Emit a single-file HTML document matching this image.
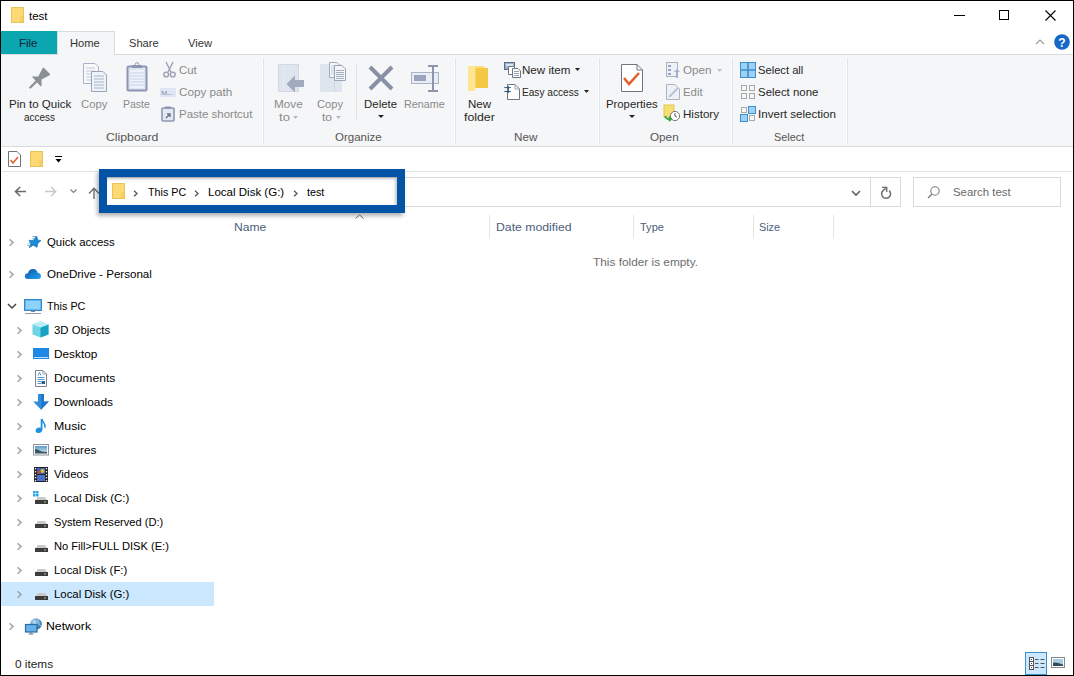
<!DOCTYPE html>
<html><head><meta charset="utf-8"><style>
html,body{margin:0;padding:0;width:1074px;height:676px;overflow:hidden;background:#fff}
.t{position:absolute;white-space:nowrap;font-family:"Liberation Sans",sans-serif;font-size:12px;line-height:15px;transform-origin:0 0}
svg{overflow:visible}
</style></head><body>
<div style="position:absolute;left:0px;top:0px;width:1074px;height:676px;background:#fff"></div>
<div style="position:absolute;left:1px;top:54px;width:1072px;height:93px;background:#f5f6f7;border-top:1px solid #dadbdc;border-bottom:1px solid #dadbdc;box-sizing:border-box"></div>
<div style="position:absolute;left:1px;top:31px;width:56px;height:23px;background:#0ca6b0"></div>
<div style="position:absolute;left:57px;top:31px;width:58px;height:24px;background:#f5f6f7;border:1px solid #dadbdc;border-bottom:none;box-sizing:border-box"></div>
<div style="position:absolute;left:263px;top:58px;width:1px;height:86px;background:#e2e3e4"></div>
<div style="position:absolute;left:262px;top:58px;width:1px;height:86px;background:#fbfcfd"></div>
<div style="position:absolute;left:455px;top:58px;width:1px;height:86px;background:#e2e3e4"></div>
<div style="position:absolute;left:454px;top:58px;width:1px;height:86px;background:#fbfcfd"></div>
<div style="position:absolute;left:599px;top:58px;width:1px;height:86px;background:#e2e3e4"></div>
<div style="position:absolute;left:598px;top:58px;width:1px;height:86px;background:#fbfcfd"></div>
<div style="position:absolute;left:732px;top:58px;width:1px;height:86px;background:#e2e3e4"></div>
<div style="position:absolute;left:731px;top:58px;width:1px;height:86px;background:#fbfcfd"></div>
<div style="position:absolute;left:847px;top:58px;width:1px;height:86px;background:#e2e3e4"></div>
<div style="position:absolute;left:846px;top:58px;width:1px;height:86px;background:#fbfcfd"></div>
<div style="position:absolute;left:356px;top:64px;width:1px;height:56px;background:#e2e3e4"></div>
<div style="position:absolute;left:2px;top:171px;width:1070px;height:1px;background:#e3e3e3"></div>
<svg style="position:absolute;left:11px;top:7px" width="13" height="16" viewBox="0 0 13 16"><rect x="0.5" y="0.5" width="12" height="15" fill="#fcd975" stroke="#e8c35a"/><rect x="9" y="9" width="3" height="6" fill="#f6cf5f"/></svg>
<div class="t" style="left:29.00px;top:9px;font-size:11.5px;color:#000;transform:scaleX(0.9989);">test</div>
<div style="position:absolute;left:954px;top:15px;width:11px;height:1px;background:#000"></div>
<div style="position:absolute;left:999px;top:10px;width:10px;height:10px;border:1px solid #000;box-sizing:border-box"></div>
<svg style="position:absolute;left:1045px;top:10px" width="11" height="11" viewBox="0 0 11 11"><path d="M0.5 0.5L10.5 10.5M10.5 0.5L0.5 10.5" stroke="#000" stroke-width="1.1"/></svg>
<div class="t" style="left:19.30px;top:36px;font-size:11.5px;color:#10203a;transform:scaleX(0.9937);">File</div>
<div class="t" style="left:70.34px;top:36px;font-size:11.5px;color:#333;transform:scaleX(0.9729);">Home</div>
<div class="t" style="left:129.08px;top:36px;font-size:11.5px;color:#333;transform:scaleX(0.9645);">Share</div>
<div class="t" style="left:188.26px;top:36px;font-size:11.5px;color:#333;transform:scaleX(0.9704);">View</div>
<svg style="position:absolute;left:1035px;top:39px" width="10" height="6" viewBox="0 0 10 6"><path d="M1 5L5 1L9 5" stroke="#9a9a9a" stroke-width="1.2" fill="none"/></svg>
<svg style="position:absolute;left:1054px;top:34px" width="16" height="16" viewBox="0 0 16 16"><circle cx="8" cy="8" r="7.8" fill="#1767c6"/><text x="8" y="12.6" font-family="Liberation Sans" font-weight="bold" font-size="12" fill="#fff" text-anchor="middle">?</text></svg>
<svg style="position:absolute;left:26px;top:64px" width="28" height="28" viewBox="0 0 28 28"><path d="M5.8 12.6L12.3 12.4L16.6 4.2L17.6 3.6L24.2 10.2L23.6 11.2L15.5 15.6L15.6 22L14.8 22.6Z" fill="#8a9196"/><path d="M4.3 23.5L11.2 16.6" stroke="#8a9196" stroke-width="2.2" stroke-linecap="round"/></svg>
<div class="t" style="left:8.56px;top:97px;font-size:11.5px;color:#262626;transform:scaleX(1.0054);">Pin to Quick</div>
<div class="t" style="left:24.26px;top:110px;font-size:11.5px;color:#262626;transform:scaleX(0.8678);">access</div>
<svg style="position:absolute;left:83px;top:63px" width="25" height="29" viewBox="0 0 25 29"><path d="M0.5 0.5H12L15.5 4V20.5H0.5Z" fill="#f7f9fc" stroke="#a8b2c2"/><g stroke="#c3cad6"><path d="M3 5H12M3 8H12M3 11H12M3 14H12M3 17H12"/></g><path d="M8.5 8.5H20L23.5 12V28.5H8.5Z" fill="#eef3fa" stroke="#98a4b8"/><g stroke="#a9b4c6"><path d="M11 13H21M11 16H21M11 19H21M11 22H21M11 25H21"/></g></svg>
<div class="t" style="left:80.58px;top:97px;font-size:11.5px;color:#8a8a8a;transform:scaleX(0.9785);">Copy</div>
<svg style="position:absolute;left:126px;top:62px" width="22" height="30" viewBox="0 0 22 30"><rect x="1.5" y="4.5" width="19" height="24" rx="1" fill="#dde5f4" stroke="#8d96b0" stroke-width="2"/><rect x="4" y="8" width="14" height="18" fill="#eef2fb"/><g stroke="#c7d0e4"><path d="M4 11H18M4 14H18M4 17H18M4 20H18M4 23H18"/></g><rect x="6" y="3" width="10" height="3" fill="#8d96b0"/><circle cx="11" cy="2.5" r="1.8" fill="none" stroke="#8d96b0"/></svg>
<div class="t" style="left:123.06px;top:97px;font-size:11.5px;color:#8a8a8a;transform:scaleX(0.9127);">Paste</div>
<svg style="position:absolute;left:163px;top:62px" width="13" height="16" viewBox="0 0 13 16"><path d="M3 0L8 10M10 0L5 10" stroke="#9aa0b4" stroke-width="1.4"/><circle cx="3.2" cy="12.5" r="2.4" fill="none" stroke="#9aa0b4" stroke-width="1.4"/><circle cx="9.8" cy="12.5" r="2.4" fill="none" stroke="#9aa0b4" stroke-width="1.4"/></svg>
<div class="t" style="left:179.34px;top:63px;font-size:11.5px;color:#8a8a8a;transform:scaleX(0.9926);">Cut</div>
<svg style="position:absolute;left:160px;top:88px" width="16" height="9" viewBox="0 0 16 9"><rect x="0" y="0" width="16" height="9" fill="#dfe6f3"/><text x="1" y="7" font-family="Liberation Serif" font-size="7" fill="#7d879e">M...</text></svg>
<div class="t" style="left:179.34px;top:85px;font-size:11.5px;color:#8a8a8a;transform:scaleX(1.0177);">Copy path</div>
<svg style="position:absolute;left:161px;top:106px" width="14" height="16" viewBox="0 0 14 16"><rect x="1" y="2" width="12" height="13" rx="1" fill="#e3e8f2" stroke="#8d96b0" stroke-width="1.6"/><rect x="4" y="0.5" width="6" height="2.5" fill="#8d96b0"/><path d="M5 12L9 8M6 8H9V11" stroke="#6d7894" stroke-width="1.5" fill="none"/></svg>
<div class="t" style="left:179.34px;top:107px;font-size:11.5px;color:#8a8a8a;transform:scaleX(0.9984);">Paste shortcut</div>
<div class="t" style="left:105.54px;top:130px;font-size:11.5px;color:#555;transform:scaleX(1.0649);">Clipboard</div>
<svg style="position:absolute;left:278px;top:64px" width="27" height="29" viewBox="0 0 27 29"><rect x="0" y="0" width="21" height="28" fill="#dfe5ee"/><rect x="0.5" y="0.5" width="20" height="27" fill="none" stroke="#d2d9e4"/><path d="M5.5 3V27" stroke="#e6ebf2"/><path d="M8.5 20L17 11.5V16H26V23H17V28.5Z" fill="#a1abbe"/></svg>
<div class="t" style="left:273.56px;top:97px;font-size:11.5px;color:#8a8a8a;transform:scaleX(1.0200);">Move</div>
<div class="t" style="left:279.26px;top:110px;font-size:11.5px;color:#8a8a8a;transform:scaleX(1.1400);">to</div>
<svg style="position:absolute;left:293px;top:116px" width="5" height="3" viewBox="0 0 5 3"><path d="M0 0H5L2.5 3Z" fill="#b8b8b8"/></svg>
<svg style="position:absolute;left:320px;top:62px" width="27" height="30" viewBox="0 0 27 30"><rect x="0" y="2" width="22" height="28" fill="#dfe5ee"/><path d="M14.5 2V30" stroke="#cfd6e2"/><path d="M9.5 0.5H17L19.5 3V15.5H9.5Z" fill="#f4f6fa" stroke="#a0abbd"/><g stroke="#c0c8d6" stroke-width="0.8"><path d="M11 4H17M11 6H17M11 8H17M11 10H17M11 12H17"/></g><path d="M14.5 3.5H22L25.5 7V18.5H14.5Z" fill="#f4f6fa" stroke="#98a4b8"/><g stroke="#9aa6ba" stroke-width="0.9"><path d="M16 8.5H24M16 10.5H24M16 12.5H24M16 14.5H24M16 16.5H24"/></g></svg>
<div class="t" style="left:316.82px;top:97px;font-size:11.5px;color:#8a8a8a;transform:scaleX(0.9689);">Copy</div>
<div class="t" style="left:321.98px;top:110px;font-size:11.5px;color:#8a8a8a;transform:scaleX(1.0420);">to</div>
<svg style="position:absolute;left:336px;top:116px" width="5" height="3" viewBox="0 0 5 3"><path d="M0 0H5L2.5 3Z" fill="#b8b8b8"/></svg>
<svg style="position:absolute;left:368px;top:65px" width="26" height="26" viewBox="0 0 26 26"><path d="M2 2L24 24M24 2L2 24" stroke="#8790a6" stroke-width="4"/></svg>
<div class="t" style="left:363.56px;top:97px;font-size:11.5px;color:#262626;transform:scaleX(0.9965);">Delete</div>
<svg style="position:absolute;left:378px;top:115px" width="6" height="3" viewBox="0 0 6 3"><path d="M0 0H6L3 3Z" fill="#222"/></svg>
<svg style="position:absolute;left:411px;top:65px" width="28" height="27" viewBox="0 0 28 27"><rect x="0.5" y="7.5" width="27" height="11" fill="#e9edf4" stroke="#aab3c6"/><rect x="3" y="10" width="12" height="6" fill="#9aa3bf"/><path d="M17 1H27M22 1V26M17 26H27" stroke="#8c95ab" stroke-width="2" fill="none"/></svg>
<div class="t" style="left:404.30px;top:97px;font-size:11.5px;color:#8a8a8a;transform:scaleX(0.9400);">Rename</div>
<div class="t" style="left:334.74px;top:130px;font-size:11.5px;color:#555;transform:scaleX(0.9987);">Organize</div>
<svg style="position:absolute;left:468px;top:65px" width="20" height="26" viewBox="0 0 20 26"><path d="M0 1H15L17 3H20V23H7L0 26Z" fill="#fbe07a"/><path d="M7 3H20V23H7Z" fill="#f5c843"/><path d="M0 1H7V26H0Z" fill="#fde68f"/><path d="M7 3V23" stroke="#f7e6a8" stroke-width="0.8"/></svg>
<div class="t" style="left:468.06px;top:97px;font-size:11.5px;color:#262626;transform:scaleX(1.0050);">New</div>
<div class="t" style="left:464.00px;top:110px;font-size:11.5px;color:#262626;transform:scaleX(1.0683);">folder</div>
<svg style="position:absolute;left:504px;top:62px" width="17" height="16" viewBox="0 0 17 16"><rect x="0.5" y="0.5" width="10" height="7" fill="#9fb3c8" stroke="#5c6e80"/><rect x="2" y="2" width="7" height="2" fill="#d8e4ef"/><path d="M4.5 4.5H9.5L11.5 6.5V12.5H4.5Z" fill="#fff" stroke="#6b7684"/><path d="M8.5 6.5H14L16.5 9V15.5H8.5Z" fill="#fff" stroke="#6b7684"/><path d="M10 9.5H15M10 11.5H15M10 13.5H15" stroke="#98a2ae"/></svg>
<div class="t" style="left:522.32px;top:63px;font-size:11.5px;color:#262626;transform:scaleX(1.0079);">New item</div>
<svg style="position:absolute;left:575px;top:68px" width="5" height="3" viewBox="0 0 5 3"><path d="M0 0H5L2.5 3Z" fill="#222"/></svg>
<svg style="position:absolute;left:504px;top:83px" width="16" height="17" viewBox="0 0 16 17"><path d="M3.5 1.5H11L15.5 6V16.5H3.5Z" fill="#fff" stroke="#6b7684"/><path d="M11 1.5V6H15.5" fill="none" stroke="#a0a8b2"/><path d="M0.3 4.6H6.8M0.3 8.5H6.8M4.4 3V10" stroke="#2d5b7c" stroke-width="1"/></svg>
<div class="t" style="left:522.32px;top:85px;font-size:11.5px;color:#262626;transform:scaleX(0.8794);">Easy access</div>
<svg style="position:absolute;left:584px;top:90px" width="5" height="3" viewBox="0 0 5 3"><path d="M0 0H5L2.5 3Z" fill="#222"/></svg>
<div class="t" style="left:514.06px;top:130px;font-size:11.5px;color:#555;transform:scaleX(1.0150);">New</div>
<svg style="position:absolute;left:621px;top:64px" width="22" height="28" viewBox="0 0 22 28"><path d="M0.5 0.5H16L21.5 6V27.5H0.5Z" fill="#fff" stroke="#6e747c"/><path d="M16 0.5V6H21.5" fill="none" stroke="#6e747c"/><path d="M3 14L8 20L18 9" stroke="#e2622a" stroke-width="2.6" fill="none"/></svg>
<div class="t" style="left:605.58px;top:97px;font-size:11.5px;color:#262626;transform:scaleX(0.9842);">Properties</div>
<svg style="position:absolute;left:629px;top:115px" width="6" height="3" viewBox="0 0 6 3"><path d="M0 0H6L3 3Z" fill="#222"/></svg>
<svg style="position:absolute;left:666px;top:62px" width="14" height="16" viewBox="0 0 14 16"><rect x="0.5" y="0.5" width="11" height="14" fill="#eef1f6" stroke="#aab3c6"/><rect x="2" y="3" width="3" height="2" fill="#9aa3bf"/><rect x="2" y="7" width="3" height="2" fill="#9aa3bf"/><rect x="2" y="11" width="3" height="2" fill="#9aa3bf"/><path d="M8 10L11 7L14 10L12 10L12 16H10V10Z" fill="#a7aed0"/></svg>
<div class="t" style="left:682.58px;top:63px;font-size:11.5px;color:#8a8a8a;transform:scaleX(1.0150);">Open</div>
<svg style="position:absolute;left:717px;top:69px" width="5" height="3" viewBox="0 0 5 3"><path d="M0 0H5L2.5 3Z" fill="#c0c0c0"/></svg>
<svg style="position:absolute;left:666px;top:84px" width="14" height="16" viewBox="0 0 14 16"><path d="M0.5 0.5H9L13.5 5V15.5H0.5Z" fill="#eef1f6" stroke="#aab3c6"/><path d="M3 13L12 4" stroke="#b9c1d6" stroke-width="2"/></svg>
<div class="t" style="left:682.58px;top:85px;font-size:11.5px;color:#8a8a8a;transform:scaleX(0.9933);">Edit</div>
<svg style="position:absolute;left:664px;top:105px" width="16" height="16" viewBox="0 0 16 16"><rect x="0" y="0" width="10" height="12" fill="#f5df74" stroke="#e3c34c"/><circle cx="11" cy="11" r="4.6" fill="#fff" stroke="#777"/><path d="M11 8V11L13 12" stroke="#555" fill="none"/><path d="M1 11C2 14 5 15 7 14M5 12L7 14L5 16" stroke="#2ea43a" stroke-width="1.8" fill="none"/></svg>
<div class="t" style="left:682.58px;top:107px;font-size:11.5px;color:#262626;transform:scaleX(1.0050);">History</div>
<div class="t" style="left:650.26px;top:130px;font-size:11.5px;color:#555;transform:scaleX(1.0179);">Open</div>
<svg style="position:absolute;left:740px;top:62px" width="16" height="16" viewBox="0 0 16 16"><rect x="0.5" y="0.5" width="15" height="15" fill="#9fd0f2" stroke="#3a8fd0"/><path d="M8 0V16M0 8H16" stroke="#3a8fd0" stroke-width="1.6"/></svg>
<div class="t" style="left:758.34px;top:63px;font-size:11.5px;color:#262626;transform:scaleX(0.9715);">Select all</div>
<svg style="position:absolute;left:740px;top:85px" width="16" height="14" viewBox="0 0 16 14"><g fill="none" stroke="#a8a8a8"><rect x="1.5" y="0.5" width="5" height="5"/><rect x="9.5" y="0.5" width="5" height="5"/><rect x="1.5" y="8.5" width="5" height="5"/><rect x="9.5" y="8.5" width="5" height="5"/></g></svg>
<div class="t" style="left:758.34px;top:85px;font-size:11.5px;color:#262626;transform:scaleX(0.9941);">Select none</div>
<svg style="position:absolute;left:740px;top:106px" width="16" height="16" viewBox="0 0 16 16"><g fill="none" stroke="#a8a8a8"><rect x="1.5" y="1.5" width="5" height="5"/><rect x="9.5" y="9.5" width="5" height="5"/></g><rect x="8.5" y="0.5" width="7" height="7" fill="#9fd0f2" stroke="#3a8fd0"/><rect x="0.5" y="8.5" width="7" height="7" fill="#9fd0f2" stroke="#3a8fd0"/></svg>
<div class="t" style="left:758.34px;top:107px;font-size:11.5px;color:#262626;transform:scaleX(1.0088);">Invert selection</div>
<div class="t" style="left:773.56px;top:130px;font-size:11.5px;color:#555;transform:scaleX(0.9436);">Select</div>
<svg style="position:absolute;left:8px;top:151px" width="13" height="16" viewBox="0 0 13 16"><path d="M0.5 0.5H9L12.5 4V15.5H0.5Z" fill="#fff" stroke="#6e747c"/><path d="M2.5 9L5 12L10 6" stroke="#e2622a" stroke-width="1.5" fill="none"/></svg>
<svg style="position:absolute;left:30px;top:151px" width="13" height="16" viewBox="0 0 13 16"><rect x="0.5" y="0.5" width="12" height="15" fill="#fcd975" stroke="#e8c35a"/><rect x="9" y="9" width="3" height="6" fill="#f6cf5f"/></svg>
<svg style="position:absolute;left:55px;top:156px" width="8" height="8" viewBox="0 0 8 8"><path d="M0 0.5H7" stroke="#000"/><path d="M0.5 3H6.5L3.5 6.5Z" fill="#000"/></svg>
<svg style="position:absolute;left:14px;top:186px" width="13" height="11" viewBox="0 0 13 11"><path d="M12 5.5H1.8M6.2 1L1.5 5.5L6.2 10" stroke="#6a6a6a" stroke-width="1.6" fill="none"/></svg>
<svg style="position:absolute;left:44px;top:186px" width="13" height="11" viewBox="0 0 13 11"><path d="M1 5.5H11.5M7 1L11.7 5.5L7 10" stroke="#c8c8c8" stroke-width="1.4" fill="none"/></svg>
<svg style="position:absolute;left:70px;top:189px" width="7" height="5" viewBox="0 0 7 5"><path d="M0.5 0.5L3.5 3.5L6.5 0.5" stroke="#808080" stroke-width="1.2" fill="none"/></svg>
<svg style="position:absolute;left:88px;top:187px" width="12" height="12" viewBox="0 0 12 12"><path d="M6 12V1.5M1 6.5L6 1.3L11 6.5" stroke="#707070" stroke-width="1.4" fill="none"/></svg>
<div style="position:absolute;left:105px;top:177px;width:796px;height:30px;border:1px solid #d9d9d9;box-sizing:border-box;background:#fff"></div>
<div style="position:absolute;left:870px;top:177px;width:1px;height:30px;background:#d9d9d9"></div>
<svg style="position:absolute;left:851px;top:190px" width="10" height="6" viewBox="0 0 10 6"><path d="M1 1L5 5L9 1" stroke="#606060" stroke-width="1.6" fill="none"/></svg>
<svg style="position:absolute;left:876px;top:182px" width="20" height="20" viewBox="0 0 20 20"><path d="M13.2 8.6A4.5 4.5 0 1 1 7.3 8.3L9.8 6.2" stroke="#707070" stroke-width="1.5" fill="none"/><path d="M6 5.4H10.7V10" stroke="#707070" stroke-width="1.4" fill="none"/></svg>
<div style="position:absolute;left:913px;top:177px;width:148px;height:30px;border:1px solid #d9d9d9;box-sizing:border-box;background:#fff"></div>
<svg style="position:absolute;left:927px;top:186px" width="13" height="13" viewBox="0 0 13 13"><circle cx="8" cy="5" r="4.2" stroke="#7a7a7a" stroke-width="1.1" fill="none"/><path d="M5 8L1 12" stroke="#7a7a7a" stroke-width="1.2"/></svg>
<div class="t" style="left:953.32px;top:185px;font-size:11.5px;color:#6a6a6a;transform:scaleX(0.9895);">Search test</div>
<div style="position:absolute;left:99px;top:169px;width:306px;height:44px;border:8px solid #0353a6;box-sizing:border-box;box-shadow:-2px 3px 4px rgba(0,0,0,0.3), inset -2px 2px 3px rgba(0,0,0,0.22)"></div>
<svg style="position:absolute;left:112px;top:183px" width="13" height="16" viewBox="0 0 13 16"><rect x="0.5" y="0.5" width="12" height="15" fill="#fcd975" stroke="#e8c35a"/><rect x="9" y="9" width="3" height="6" fill="#f6cf5f"/></svg>
<svg style="position:absolute;left:133px;top:190px" width="5" height="7" viewBox="0 0 5 7"><path d="M1 0.8L4 3.5L1 6.2" stroke="#555" stroke-width="1.3" fill="none"/></svg>
<svg style="position:absolute;left:194px;top:190px" width="5" height="7" viewBox="0 0 5 7"><path d="M1 0.8L4 3.5L1 6.2" stroke="#555" stroke-width="1.3" fill="none"/></svg>
<svg style="position:absolute;left:293px;top:190px" width="5" height="7" viewBox="0 0 5 7"><path d="M1 0.8L4 3.5L1 6.2" stroke="#555" stroke-width="1.3" fill="none"/></svg>
<div class="t" style="left:147.76px;top:185px;font-size:11.5px;color:#000;transform:scaleX(0.9324);">This PC</div>
<div class="t" style="left:208.30px;top:185px;font-size:11.5px;color:#000;transform:scaleX(1.0021);">Local Disk (G:)</div>
<div class="t" style="left:307.26px;top:185px;font-size:11.5px;color:#000;transform:scaleX(0.9347);">test</div>
<svg style="position:absolute;left:355px;top:214px" width="9" height="5" viewBox="0 0 9 5"><path d="M0.5 4.5L4.5 0.8L8.5 4.5" stroke="#666" stroke-width="1" fill="none"/></svg>
<div class="t" style="left:234.34px;top:220px;font-size:11.5px;color:#4c607a;transform:scaleX(1.0535);">Name</div>
<div style="position:absolute;left:489px;top:215px;width:1px;height:24px;background:#e5e5e5"></div>
<div style="position:absolute;left:633px;top:215px;width:1px;height:24px;background:#e5e5e5"></div>
<div style="position:absolute;left:753px;top:215px;width:1px;height:24px;background:#e5e5e5"></div>
<div style="position:absolute;left:833px;top:215px;width:1px;height:24px;background:#e5e5e5"></div>
<div class="t" style="left:495.82px;top:220px;font-size:11.5px;color:#4c607a;transform:scaleX(1.0651);">Date modified</div>
<div class="t" style="left:640.26px;top:220px;font-size:11.5px;color:#4c607a;transform:scaleX(0.9577);">Type</div>
<div class="t" style="left:759.08px;top:220px;font-size:11.5px;color:#4c607a;transform:scaleX(0.9409);">Size</div>
<div class="t" style="left:593.02px;top:255px;font-size:11.5px;color:#6d6d6d;transform:scaleX(1.0288);">This folder is empty.</div>
<div style="position:absolute;left:1px;top:582px;width:213px;height:24px;background:#cce8ff"></div>
<svg style="position:absolute;left:8px;top:238px" width="6" height="9" viewBox="0 0 6 9"><path d="M1.6 1.2L5 4.5L1.6 7.8" stroke="#a2a2a2" stroke-width="1.6" fill="none"/></svg>
<svg style="position:absolute;left:8px;top:270px" width="6" height="9" viewBox="0 0 6 9"><path d="M1.6 1.2L5 4.5L1.6 7.8" stroke="#a2a2a2" stroke-width="1.6" fill="none"/></svg>
<svg style="position:absolute;left:8px;top:622px" width="6" height="9" viewBox="0 0 6 9"><path d="M1.6 1.2L5 4.5L1.6 7.8" stroke="#a2a2a2" stroke-width="1.6" fill="none"/></svg>
<svg style="position:absolute;left:7px;top:303px" width="10" height="6" viewBox="0 0 10 6"><path d="M1 1L5 5L9 1" stroke="#444" stroke-width="1.5" fill="none"/></svg>
<svg style="position:absolute;left:22px;top:232px" width="22" height="18" viewBox="0 0 22 18"><path d="M14.5 4L16 8.2L19 8.5L15.8 11.5L15 15.3L11.2 13.2L7.2 15.7L8.8 11.5L6.9 8.5L11.5 8.2Z" fill="#1a8ad6" stroke="#1766a8" stroke-width="0.6" stroke-linejoin="round"/><path d="M10.5 4.5H14M10.5 6.3H13M5 13.3H7.5M6.5 11.2H8" stroke="#5aa6de" stroke-width="0.9"/></svg>
<div class="t" style="left:46.74px;top:235px;font-size:11.5px;color:#000;transform:scaleX(0.9881);">Quick access</div>
<svg style="position:absolute;left:24px;top:268px" width="18" height="12" viewBox="0 0 18 12"><defs><linearGradient id="cg" x1="0" y1="0" x2="1" y2="1"><stop offset="0" stop-color="#0b4f9e"/><stop offset="0.6" stop-color="#1a86d8"/><stop offset="1" stop-color="#22a3ee"/></linearGradient></defs><path d="M3.6 11C1.6 11 0.8 9.6 0.9 8C1 6.4 2.3 5.3 3.9 5.3C4.6 2.5 6.6 1 9.1 1C11.6 1 13.4 2.8 13.9 5C16.1 5 17.1 6.6 17 8.3C16.9 9.9 15.9 11 14.4 11Z" fill="url(#cg)"/></svg>
<div class="t" style="left:46.74px;top:267px;font-size:11.5px;color:#000;transform:scaleX(1.0067);">OneDrive - Personal</div>
<svg style="position:absolute;left:24px;top:299px" width="18" height="15" viewBox="0 0 18 15"><rect x="0.5" y="0.5" width="17" height="11" fill="#5eb8f2" stroke="#3a86c6"/><rect x="2" y="2" width="14" height="8" fill="#8fd2fb"/><path d="M1 14.5H17" stroke="#8a9aa8"/><path d="M7 12.5H11" stroke="#6f8aa0"/></svg>
<div class="t" style="left:46.74px;top:299px;font-size:11.5px;color:#000;transform:scaleX(0.9381);">This PC</div>
<svg style="position:absolute;left:16px;top:326px" width="6" height="9" viewBox="0 0 6 9"><path d="M1.6 1.2L5 4.5L1.6 7.8" stroke="#a2a2a2" stroke-width="1.6" fill="none"/></svg>
<svg style="position:absolute;left:32px;top:321.2px" width="17" height="17" viewBox="0 0 17 17"><path d="M8.5 0.5L16.5 3.5V13.5L8.5 16.5L0.5 13.5V3.5Z" fill="#6fd5e6"/><path d="M8.5 6.5L16.5 3.5V13.5L8.5 16.5Z" fill="#17a2c4"/><path d="M0.5 3.5L8.5 0.5L16.5 3.5L8.5 6.5Z" fill="#b8eef5"/></svg>
<div class="t" style="left:54.26px;top:323px;font-size:11.5px;color:#000;transform:scaleX(0.9867);">3D Objects</div>
<svg style="position:absolute;left:16px;top:350px" width="6" height="9" viewBox="0 0 6 9"><path d="M1.6 1.2L5 4.5L1.6 7.8" stroke="#a2a2a2" stroke-width="1.6" fill="none"/></svg>
<svg style="position:absolute;left:33px;top:348.2px" width="16" height="11" viewBox="0 0 16 11"><rect x="0" y="0" width="16" height="11" fill="#1e88e5"/><rect x="1" y="9" width="14" height="1" fill="#bfe3ff"/></svg>
<div class="t" style="left:53.56px;top:347px;font-size:11.5px;color:#000;transform:scaleX(1.0260);">Desktop</div>
<svg style="position:absolute;left:16px;top:374px" width="6" height="9" viewBox="0 0 6 9"><path d="M1.6 1.2L5 4.5L1.6 7.8" stroke="#a2a2a2" stroke-width="1.6" fill="none"/></svg>
<svg style="position:absolute;left:35px;top:369.7px" width="12" height="17" viewBox="0 0 12 17"><path d="M0.5 0.5H8L11.5 4V16.5H0.5Z" fill="#fbfcfd" stroke="#7d8690"/><path d="M8 0.5V4H11.5" fill="none" stroke="#9aa2aa"/><path d="M3 5.5L4.5 2.5L6 5.5M2.5 7.5H9.5M2.5 9.5H9.5M2.5 11.5H6M2.5 13.5H6" stroke="#4a86c0" stroke-width="0.9" fill="none"/><rect x="6.5" y="11" width="3.5" height="3" fill="#2c5f8e"/></svg>
<div class="t" style="left:53.56px;top:371px;font-size:11.5px;color:#000;transform:scaleX(1.0548);">Documents</div>
<svg style="position:absolute;left:16px;top:398px" width="6" height="9" viewBox="0 0 6 9"><path d="M1.6 1.2L5 4.5L1.6 7.8" stroke="#a2a2a2" stroke-width="1.6" fill="none"/></svg>
<svg style="position:absolute;left:33px;top:393.7px" width="16" height="17" viewBox="0 0 16 17"><path d="M5 0H11V7.5H15.8L8 15.8L0.2 7.5H5Z" fill="#2f8ee2"/><path d="M8 0H11V7.5H15.8L8 15.8Z" fill="#2378c8"/></svg>
<div class="t" style="left:53.56px;top:395px;font-size:11.5px;color:#000;transform:scaleX(1.0382);">Downloads</div>
<svg style="position:absolute;left:16px;top:422px" width="6" height="9" viewBox="0 0 6 9"><path d="M1.6 1.2L5 4.5L1.6 7.8" stroke="#a2a2a2" stroke-width="1.6" fill="none"/></svg>
<svg style="position:absolute;left:35px;top:417.7px" width="12" height="16" viewBox="0 0 12 16"><path d="M6.6 1V11.8" stroke="#1e90e0" stroke-width="1.8"/><ellipse cx="3.9" cy="12.3" rx="3.3" ry="2.6" transform="rotate(-20 3.9 12.3)" fill="#1e90e0"/><path d="M6.6 1C7.4 4 10.6 5.2 10 9.6" stroke="#1e90e0" stroke-width="1.6" fill="none"/></svg>
<div class="t" style="left:53.56px;top:419px;font-size:11.5px;color:#000;transform:scaleX(1.0720);">Music</div>
<svg style="position:absolute;left:16px;top:446px" width="6" height="9" viewBox="0 0 6 9"><path d="M1.6 1.2L5 4.5L1.6 7.8" stroke="#a2a2a2" stroke-width="1.6" fill="none"/></svg>
<svg style="position:absolute;left:33px;top:444.2px" width="16" height="12" viewBox="0 0 16 12"><defs><linearGradient id="sky" x1="0" y1="0" x2="0" y2="1"><stop offset="0" stop-color="#5d9bc8"/><stop offset="1" stop-color="#d9e9f3"/></linearGradient></defs><rect x="0.5" y="0.5" width="15" height="10.5" fill="#fff" stroke="#8e9399"/><rect x="2" y="2" width="12" height="7.5" fill="url(#sky)"/><path d="M2 5C4 4.5 6 6.5 9 7.5C11 8 13 7.8 14 8V9.5H2Z" fill="#3b5561"/></svg>
<div class="t" style="left:53.56px;top:443px;font-size:11.5px;color:#000;transform:scaleX(1.0210);">Pictures</div>
<svg style="position:absolute;left:16px;top:470px" width="6" height="9" viewBox="0 0 6 9"><path d="M1.6 1.2L5 4.5L1.6 7.8" stroke="#a2a2a2" stroke-width="1.6" fill="none"/></svg>
<svg style="position:absolute;left:34px;top:467.2px" width="14" height="15" viewBox="0 0 14 15"><rect x="0" y="0" width="14" height="15" fill="#222"/><rect x="3" y="1" width="8" height="6" fill="#3f62b8"/><circle cx="8.5" cy="4" r="2" fill="#e0c23a"/><rect x="3.5" y="4" width="3" height="2.5" fill="#c8453a"/><rect x="3" y="8" width="8" height="6" fill="#4a72c8"/><g fill="#e6e6e6"><rect x="0.8" y="1" width="1.4" height="1.4"/><rect x="0.8" y="4" width="1.4" height="1.4"/><rect x="0.8" y="7" width="1.4" height="1.4"/><rect x="0.8" y="10" width="1.4" height="1.4"/><rect x="0.8" y="13" width="1.4" height="1.4"/><rect x="11.8" y="1" width="1.4" height="1.4"/><rect x="11.8" y="4" width="1.4" height="1.4"/><rect x="11.8" y="7" width="1.4" height="1.4"/><rect x="11.8" y="10" width="1.4" height="1.4"/><rect x="11.8" y="13" width="1.4" height="1.4"/></g></svg>
<div class="t" style="left:54.26px;top:467px;font-size:11.5px;color:#000;transform:scaleX(0.9857);">Videos</div>
<svg style="position:absolute;left:16px;top:494px" width="6" height="9" viewBox="0 0 6 9"><path d="M1.6 1.2L5 4.5L1.6 7.8" stroke="#a2a2a2" stroke-width="1.6" fill="none"/></svg>
<svg style="position:absolute;left:33px;top:491.2px" width="16" height="14" viewBox="0 0 16 14"><g fill="#2ea3e6"><rect x="0" y="0" width="2.5" height="2.5"/><rect x="3" y="0" width="2.5" height="2.5"/><rect x="0" y="3" width="2.5" height="2.5"/><rect x="3" y="3" width="2.5" height="2.5"/></g><path d="M3 9L4.5 6H12L14 9Z" fill="#c9c9c9"/><rect x="2" y="9" width="13" height="4" fill="#3c3c3c"/><rect x="11" y="10.5" width="2" height="1" fill="#7bd17b"/></svg>
<div class="t" style="left:53.56px;top:491px;font-size:11.5px;color:#000;transform:scaleX(0.9984);">Local Disk (C:)</div>
<svg style="position:absolute;left:16px;top:518px" width="6" height="9" viewBox="0 0 6 9"><path d="M1.6 1.2L5 4.5L1.6 7.8" stroke="#a2a2a2" stroke-width="1.6" fill="none"/></svg>
<svg style="position:absolute;left:33px;top:515.2px" width="16" height="14" viewBox="0 0 16 14"><path d="M3 9L4.5 6H12L14 9Z" fill="#c9c9c9"/><rect x="2" y="9" width="13" height="4" fill="#3c3c3c"/><rect x="11" y="10.5" width="2" height="1" fill="#7bd17b"/></svg>
<div class="t" style="left:54.26px;top:515px;font-size:11.5px;color:#000;transform:scaleX(0.9665);">System Reserved (D:)</div>
<svg style="position:absolute;left:16px;top:542px" width="6" height="9" viewBox="0 0 6 9"><path d="M1.6 1.2L5 4.5L1.6 7.8" stroke="#a2a2a2" stroke-width="1.6" fill="none"/></svg>
<svg style="position:absolute;left:33px;top:539.2px" width="16" height="14" viewBox="0 0 16 14"><path d="M3 9L4.5 6H12L14 9Z" fill="#c9c9c9"/><rect x="2" y="9" width="13" height="4" fill="#3c3c3c"/><rect x="11" y="10.5" width="2" height="1" fill="#7bd17b"/></svg>
<div class="t" style="left:53.56px;top:539px;font-size:11.5px;color:#000;transform:scaleX(0.9677);">No Fill&gt;FULL DISK (E:)</div>
<svg style="position:absolute;left:16px;top:566px" width="6" height="9" viewBox="0 0 6 9"><path d="M1.6 1.2L5 4.5L1.6 7.8" stroke="#a2a2a2" stroke-width="1.6" fill="none"/></svg>
<svg style="position:absolute;left:33px;top:563.2px" width="16" height="14" viewBox="0 0 16 14"><path d="M3 9L4.5 6H12L14 9Z" fill="#c9c9c9"/><rect x="2" y="9" width="13" height="4" fill="#3c3c3c"/><rect x="11" y="10.5" width="2" height="1" fill="#7bd17b"/></svg>
<div class="t" style="left:53.56px;top:563px;font-size:11.5px;color:#000;transform:scaleX(0.9889);">Local Disk (F:)</div>
<svg style="position:absolute;left:16px;top:590px" width="6" height="9" viewBox="0 0 6 9"><path d="M1.6 1.2L5 4.5L1.6 7.8" stroke="#a2a2a2" stroke-width="1.6" fill="none"/></svg>
<svg style="position:absolute;left:33px;top:587.2px" width="16" height="14" viewBox="0 0 16 14"><path d="M3 9L4.5 6H12L14 9Z" fill="#c9c9c9"/><rect x="2" y="9" width="13" height="4" fill="#3c3c3c"/><rect x="11" y="10.5" width="2" height="1" fill="#7bd17b"/></svg>
<div class="t" style="left:53.56px;top:587px;font-size:11.5px;color:#000;transform:scaleX(0.9892);">Local Disk (G:)</div>
<svg style="position:absolute;left:24px;top:617px" width="18" height="18" viewBox="0 0 18 18"><defs><radialGradient id="gl" cx="0.35" cy="0.35" r="0.7"><stop offset="0" stop-color="#b8dcf4"/><stop offset="0.6" stop-color="#5a9ccc"/><stop offset="1" stop-color="#2f6a98"/></radialGradient></defs><circle cx="12" cy="7" r="5.8" fill="url(#gl)"/><path d="M9 2.5C11 4 12 8 11 12.5M14 1.8C14.5 5 15 8.5 17.5 9" stroke="#d8ecf8" stroke-width="0.7" fill="none" opacity="0.7"/><rect x="1.5" y="7.5" width="11.5" height="7.5" fill="#62b3ea" stroke="#2c6aa0" stroke-width="1.2"/><path d="M4.5 17H9.5M7 15V17" stroke="#557a99" stroke-width="1"/></svg>
<div class="t" style="left:45.58px;top:619px;font-size:11.5px;color:#000;transform:scaleX(1.0674);">Network</div>
<div class="t" style="left:15.48px;top:657px;font-size:11.5px;color:#1e1e1e;transform:scaleX(1.0265);">0 items</div>
<div style="position:absolute;left:1025px;top:652px;width:22px;height:23px;background:#cce8ff;border:1px solid #3d8fc6;box-sizing:border-box"></div>
<svg style="position:absolute;left:1029px;top:657px" width="17" height="13" viewBox="0 0 17 13"><g fill="#fff" stroke="#555"><rect x="0.5" y="0.5" width="4" height="4"/><rect x="0.5" y="4.5" width="4" height="4"/><rect x="0.5" y="8.5" width="4" height="4"/></g><g stroke="#555" stroke-width="1.1"><path d="M6 2.5H9.5M11.5 2.5H15.5M6 6.5H9.5M11.5 6.5H15.5M6 10.5H9.5M11.5 10.5H15.5"/></g><g fill="#444"><rect x="2" y="2" width="1" height="1"/><rect x="2" y="6" width="1" height="1"/><rect x="2" y="10" width="1" height="1"/></g></svg>
<svg style="position:absolute;left:1051px;top:657px" width="14" height="11" viewBox="0 0 14 11"><rect x="0.5" y="0.5" width="13" height="10" fill="#fff" stroke="#8a8a8a"/><rect x="2" y="2" width="10" height="7" fill="#a9cde0"/><path d="M2 6C4 5 7 6 12 7.5V9H2Z" fill="#2f4b58"/></svg>
<div style="position:absolute;left:0;top:0;width:1074px;height:676px;border:1px solid #000;box-sizing:border-box"></div>
</body></html>
